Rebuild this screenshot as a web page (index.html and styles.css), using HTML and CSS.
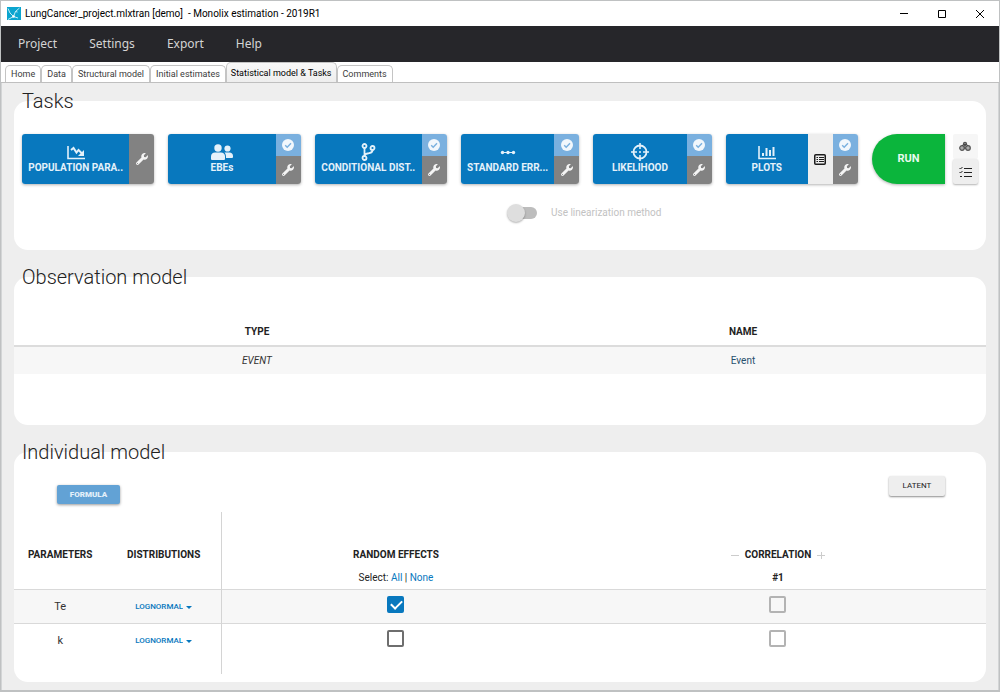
FILE: index.html
```html
<!DOCTYPE html>
<html lang="en">
<head>
<meta charset="utf-8">
<title>Monolix estimation</title>
<link rel="stylesheet" href="styles.css">
</head>
<body>
<svg class="defs" aria-hidden="true">
  <symbol id="wrench" viewBox="0 0 512 512"><path fill="currentColor" d="M507.73 109.1c-2.24-9.03-13.54-12.09-20.12-5.51l-74.36 74.36-67.88-11.31-11.31-67.88 74.36-74.36c6.62-6.62 3.43-17.9-5.66-20.16-47.38-11.74-99.55.91-136.58 37.93-39.64 39.64-50.55 97.1-34.05 147.2L18.74 402.76c-24.99 24.99-24.99 65.51 0 90.5 24.99 24.99 65.51 24.99 90.5 0l213.21-213.21c50.12 16.71 107.47 5.68 147.37-34.22 37.07-37.07 49.7-89.32 37.91-136.73zM64 472c-13.25 0-24-10.75-24-24 0-13.26 10.75-24 24-24s24 10.74 24 24c0 13.25-10.75 24-24 24z"/></symbol>
  <symbol id="check" viewBox="0 0 12 12"><circle cx="6" cy="6" r="6" fill="#f2f7fc"/><path d="M3.2 6.2l2 2 3.800-4" fill="none" stroke="#7ab0df" stroke-width="1.400"/></symbol>
</svg>
<div class="window">
  <header class="titlebar">
    <svg class="logo" viewBox="0 0 14 14" aria-hidden="true"><rect width="14" height="13" fill="#0ba5cf"/><path d="M1 1.500l2 4.500 3.500 3.500M12.500 1L8.500 4.500l-2 5M1 12.500L6.500 9.500 11 11M8.500 4.500l2 .5" fill="none" stroke="#d6f4fb" stroke-width=".9"/><circle cx="6.500" cy="9.500" r="1.300" fill="#fff"/></svg>
    <h1 class="caption">LungCancer_project.mlxtran [demo]&nbsp; - Monolix estimation - 2019R1</h1>
    <button class="win-btn" aria-label="Minimize"><svg width="10" height="10" viewBox="0 0 10 10"><path d="M1 4.500h8" stroke="#000"/></svg></button>
    <button class="win-btn" aria-label="Maximize"><svg width="10" height="10" viewBox="0 0 10 10"><path d="M1.500 1.500h7v7h-7z" fill="none" stroke="#000"/></svg></button>
    <button class="win-btn" aria-label="Close"><svg width="10" height="10" viewBox="0 0 10 10"><path d="M1 1l8 8M9 1L1 9" stroke="#000"/></svg></button>
  </header>
  <nav class="menu">
    <button>Project</button><button>Settings</button><button>Export</button><button>Help</button>
  </nav>
  <nav class="tabs">
    <button class="tab">Home</button>
    <button class="tab">Data</button>
    <button class="tab">Structural model</button>
    <button class="tab">Initial estimates</button>
    <button class="tab active">Statistical model &amp; Tasks</button>
    <button class="tab">Comments</button>
  </nav>
  <main class="content">
    <section class="section">
      <h2>Tasks</h2>
      <div class="panel tasks">
        <div class="task-row">
          <div class="task">
            <button class="task-main"><svg width="18" height="15" viewBox="0 0 18 15"><path d="M1 1v12.500h17" fill="none" stroke="currentColor" stroke-width="1.600"/><path d="M4 5l2.500-2 3 4.500 2-2.500 4 4" fill="none" stroke="currentColor" stroke-width="2"/><path d="M17 5v6h-6z" fill="currentColor"/></svg><span>POPULATION PARA..</span></button>
            <div class="side"><button class="settings" aria-label="Settings"><svg width="12" height="12"><use href="#wrench"/></svg></button></div>
          </div>
          <div class="task">
            <button class="task-main"><svg width="22" height="16" viewBox="0 0 22 16"><g fill="currentColor"><circle cx="7" cy="4" r="3.700"/><path d="M0 15v-2.500c0-2.500 1.800-4 4-4h6c2.200 0 4 1.500 4 4V15q0 1-1 1H1q-1 0-1-1z"/><circle cx="16.500" cy="4.500" r="3.100"/><path d="M13.500 8.500h5c2 0 3.500 1.500 3.500 3.500v1q0 1-1 1h-6c0-2.500 0-4-1.500-5.500z"/></g></svg><span>EBEs</span></button>
            <div class="side"><button class="done" aria-label="Enabled"><svg width="12" height="12"><use href="#check"/></svg></button><button class="settings" aria-label="Settings"><svg width="12" height="12"><use href="#wrench"/></svg></button></div>
          </div>
          <div class="task">
            <button class="task-main"><svg width="15" height="18" viewBox="0 0 15 18"><g fill="none" stroke="currentColor" stroke-width="1.800"><circle cx="3.500" cy="3" r="2"/><circle cx="3.500" cy="15" r="2"/><circle cx="11.500" cy="5" r="2"/><path d="M3.500 5v8M11.500 7c0 3-2 3-5 3.500-2 .3-3 1-3 2.500"/></g></svg><span>CONDITIONAL DIST..</span></button>
            <div class="side"><button class="done" aria-label="Enabled"><svg width="12" height="12"><use href="#check"/></svg></button><button class="settings" aria-label="Settings"><svg width="12" height="12"><use href="#wrench"/></svg></button></div>
          </div>
          <div class="task narrow">
            <button class="task-main"><svg width="16" height="16" viewBox="0 0 16 16"><path d="M2 8.500h12" stroke="currentColor" stroke-width="1.200"/><g fill="currentColor"><circle cx="2.500" cy="8.500" r="1.700"/><circle cx="8" cy="8.500" r="1.700"/><circle cx="13.500" cy="8.500" r="1.700"/></g></svg><span>STANDARD ERR...</span></button>
            <div class="side"><button class="done" aria-label="Enabled"><svg width="12" height="12"><use href="#check"/></svg></button><button class="settings" aria-label="Settings"><svg width="12" height="12"><use href="#wrench"/></svg></button></div>
          </div>
          <div class="task narrow">
            <button class="task-main"><svg width="18" height="18" viewBox="0 0 18 18"><circle cx="9" cy="9" r="6.500" fill="none" stroke="currentColor" stroke-width="1.800"/><path d="M9 0v6M9 12v6M0 9h6M12 9h6" stroke="currentColor" stroke-width="1.600"/><circle cx="9" cy="9" r="1" fill="currentColor"/></svg><span>LIKELIHOOD</span></button>
            <div class="side"><button class="done" aria-label="Enabled"><svg width="12" height="12"><use href="#check"/></svg></button><button class="settings" aria-label="Settings"><svg width="12" height="12"><use href="#wrench"/></svg></button></div>
          </div>
          <div class="task">
            <button class="task-main"><svg width="18" height="15" viewBox="0 0 18 15"><path d="M1 1v12.500h17" fill="none" stroke="currentColor" stroke-width="1.600"/><path d="M5 11V8M8.500 11V3M12 11V5M15.500 11V2" stroke="currentColor" stroke-width="2"/></svg><span>PLOTS</span></button>
            <button class="list" aria-label="Plot list"><svg width="12" height="11" viewBox="0 0 12 11"><rect x=".75" y=".75" width="10.500" height="9.500" rx="1" fill="#eee" stroke="#1c1c1c" stroke-width="1.500"/><path d="M2.500 3.500h1.500M5 3.500h5M2.500 5.500h1.500M5 5.500h5M2.500 7.500h1.500M5 7.500h5" stroke="#1c1c1c"/></svg></button>
            <div class="side"><button class="done" aria-label="Enabled"><svg width="12" height="12"><use href="#check"/></svg></button><button class="settings" aria-label="Settings"><svg width="12" height="12"><use href="#wrench"/></svg></button></div>
          </div>
          <div class="run-group">
            <button class="run">RUN</button>
            <div class="extras">
              <button class="extra" aria-label="Assessment"><svg width="12" height="11" viewBox="0 0 12 11"><g fill="#aaa" stroke="#555" stroke-width="1.200"><circle cx="3" cy="7" r="2.300"/><circle cx="9" cy="7" r="2.300"/><circle cx="6" cy="2.800" r="1.500"/></g><path d="M6 3v5M3 4.500L6 3l3 1.500" fill="none" stroke="#444"/></svg></button>
              <button class="extra raised" aria-label="Checklist"><svg width="13" height="12" viewBox="0 0 13 12"><path d="M5 2.500h8M5 6.500h8M5 10.500h8" stroke="#222"/><path d="M.5 2l1 1 2-2M.5 6l1 1 2-2M1 10.500h2" fill="none" stroke="#222"/></svg></button>
            </div>
          </div>
        </div>
        <label class="switch"><input type="checkbox" disabled><span>Use linearization method</span></label>
      </div>
    </section>

    <section class="section">
      <h2>Observation model</h2>
      <div class="panel observation">
        <table class="obs-table">
          <thead><tr><th>TYPE</th><th>NAME</th></tr></thead>
          <tbody><tr><td class="type">EVENT</td><td class="name">Event</td></tr></tbody>
        </table>
      </div>
    </section>

    <section class="section last">
      <h2>Individual model</h2>
      <div class="panel individual">
        <div class="toolbar"><button class="formula">FORMULA</button><button class="latent">LATENT</button></div>
        <table class="ind-table">
          <colgroup><col class="c-param"><col class="c-dist"><col class="c-random"><col class="c-corr"></colgroup>
          <thead><tr>
            <th>PARAMETERS</th>
            <th class="dist">DISTRIBUTIONS</th>
            <th>RANDOM EFFECTS<div class="sub">Select: <a href="#all">All</a> | <a href="#none">None</a></div></th>
            <th><div class="corr"><button aria-label="Remove group"><svg width="8" height="8" viewBox="0 0 8 8"><path d="M0 4.500h8" stroke="#ccc"/></svg></button>CORRELATION<button aria-label="Add group"><svg width="8" height="8" viewBox="0 0 8 8"><path d="M0 4.500h8M4.500 1v7" stroke="#ccc"/></svg></button></div><div class="num">#1</div></th>
          </tr></thead>
          <tbody>
            <tr>
              <td>Te</td>
              <td class="dist"><span class="picker"><select aria-label="Distribution of Te"><option>LOGNORMAL</option></select></span></td>
              <td><input class="box" type="checkbox" checked aria-label="Random effect on Te"></td>
              <td><input class="box" type="checkbox" disabled aria-label="Correlation 1 for Te"></td>
            </tr>
            <tr>
              <td>k</td>
              <td class="dist"><span class="picker"><select aria-label="Distribution of k"><option>LOGNORMAL</option></select></span></td>
              <td><input class="box" type="checkbox" aria-label="Random effect on k"></td>
              <td><input class="box" type="checkbox" disabled aria-label="Correlation 1 for k"></td>
            </tr>
          </tbody>
        </table>
      </div>
    </section>
  </main>
</div>
</body>
</html>
```
FILE: styles.css
```css
* { box-sizing: border-box; }
body { margin: 0; font-family: Roboto, "Liberation Sans", sans-serif; font-size: 11px; line-height: 16px; color: #222; background: #fff; }
button { font: inherit; color: inherit; border: 0; padding: 0; background: none; }
svg { display: block; }
.defs { position: absolute; width: 0; height: 0; }

.window { min-height: 100vh; display: flex; flex-direction: column; border: 1px solid #bfc1c2; border-bottom-width: 2px; }

.titlebar { display: flex; align-items: center; height: 25px; padding-left: 6px; }
.logo { width: 14px; height: 14px; margin-right: 4px; }
.caption { flex: 1; margin: 0; font: 400 10px/16px Roboto, sans-serif; color: #000; }
.win-btn { width: 38px; height: 24px; display: flex; align-items: center; justify-content: center; }

.menu { display: flex; gap: 32px; align-items: center; height: 36px; padding-left: 17px; background: #26262a; }
.menu button { font: 400 12px/16px "Noto Sans", sans-serif; color: #d4d4d4; }

.tabs { display: flex; align-items: flex-end; height: 21px; padding-left: 4px; border-bottom: 1px solid #bfbfbf; }
.tab { height: 17px; padding: 0 5px; border: 1px solid #c4c4c4; border-bottom: 0; border-radius: 5px 5px 0 0; background: #fff; font-size: 9px; line-height: 16px; color: #3c3c3c; white-space: nowrap; }
.tab.active { height: 20px; padding: 0 4px; background: linear-gradient(#f8f8f8, #eee); color: #000; }

.content { flex: 1; padding: 6px 12px 8px; border: solid #d3d5d6; border-width: 0 1px; background: #eee; }
.section { margin-bottom: 15px; }
.section.last { margin-bottom: 0; }
h2 { position: relative; margin: 0 0 -12px 8px; font-size: 20px; line-height: 24px; font-weight: 300; color: #222; }
.panel { border-radius: 14px; background: #fff; }

.tasks { padding: 33px 8px 28px; }
.task-row { display: flex; gap: 14px; }
.task { flex: 1 1 132px; display: flex; height: 50px; border-radius: 3px; overflow: hidden; box-shadow: 0 1px 3px rgba(0, 0, 0, .3); }
.task.narrow { flex-basis: 118px; }
.task-main { flex: 1; min-width: 0; padding: 9px 0; display: flex; flex-direction: column; align-items: center; background: #0878be; color: #e4f1fa; font-weight: 700; font-size: 10px; line-height: 14px; white-space: nowrap; }
.task-main svg { margin: auto 0; }
.side { width: 25px; display: flex; flex-direction: column; }
.side button, .list { flex: 1; display: flex; align-items: center; justify-content: center; }
.side .done { flex: 0 0 22px; background: #7ab0df; }
.settings { background: #828282; color: #f4f4f4; }
.list { flex: 0 0 25px; background: #eee; }
.run-group { display: flex; gap: 8px; }
.run { width: 73px; height: 50px; border-radius: 25px 0 0 25px; background: #0bb53c; color: #e9fbee; font-weight: 700; box-shadow: 0 1px 3px rgba(0, 0, 0, .3); }
.extras { display: flex; flex-direction: column; width: 25px; }
.extra { flex: 1; display: flex; align-items: center; justify-content: center; background: #f6f6f6; border-radius: 2px; }
.extra.raised { background: #eee; box-shadow: 0 1px 2px rgba(0, 0, 0, .3); }

.switch { display: flex; align-items: center; gap: 14px; height: 18px; margin: 20px 0 0 calc(50% + 7px); color: #c2c2c2; font-size: 10px; }
.switch input { appearance: none; position: relative; width: 27px; height: 12px; margin: 0 0 0 3px; border-radius: 6px; background: #bdbdbd; }
.switch input::before { content: ""; position: absolute; left: -3px; top: -3px; width: 18px; height: 18px; border-radius: 50%; background: #dedede; box-shadow: 0 1px 2px rgba(0, 0, 0, .3); }

table { width: 100%; border-collapse: separate; border-spacing: 0; table-layout: fixed; text-align: center; }
th { font-size: 10px; font-weight: 700; color: #222; }
td { color: #333; }

.observation { padding: 44px 0 51px; }
.obs-table th { padding: 3px 0 5px; border-bottom: 2px solid #dcdcdc; }
.obs-table td { height: 27px; padding: 0; background: #f7f7f7; font-size: 10px; }
.obs-table .type { font-style: italic; }
.obs-table .name { color: #27506e; }

.individual { padding: 24px 0 8px; }
.toolbar { display: flex; justify-content: space-between; align-items: flex-start; height: 36px; padding: 0 41px 0 43px; font-size: 8px; }
.formula { margin-top: 9px; width: 63px; height: 19px; border-radius: 2px; background: #62a2d5; color: #e3f0fa; font-weight: 900; box-shadow: 0 1px 3px rgba(0, 0, 0, .4); }
.latent { width: 56px; height: 20px; border-radius: 2px; background: #eee; color: #222; box-shadow: 0 1px 2px rgba(0, 0, 0, .45); }
.c-param { width: 9.5%; }
.c-dist { width: 11.9%; }
.c-random { width: 35.8%; }
.ind-table th { height: 77px; padding: 35px 0 3px; vertical-align: top; }
.ind-table td { padding: 0; height: 34px; border-top: 1px solid #d9d9d9; }
.ind-table tbody tr:first-child td { background: #f7f7f7; }
.ind-table tbody tr:last-child td { height: 51px; padding-bottom: 17px; }
.ind-table .dist { border-right: 1px solid #d4d4d4; }
.sub, .num { margin-top: 7px; }
.sub { font-weight: 400; font-size: 10px; }
a { color: #0878be; text-decoration: none; }
.corr { display: flex; justify-content: center; align-items: center; gap: 6px; }
.picker { display: inline-flex; align-items: center; gap: 3px; }
.picker::after { content: ""; border: 3px solid transparent; border-top-color: #0878be; border-bottom: 0; }
.picker select { appearance: none; border: 0; padding: 0; background: none; font: 500 8px/16px Roboto, sans-serif; color: #0878be; }
.box { appearance: none; position: relative; display: block; width: 17px; height: 17px; margin: 0 auto 4px; border: 2px solid #6e6e6e; border-radius: 2px; background: #fff; }
.box:disabled { border-color: #b3b3b3; background: none; }
.box:checked { border-color: #0878be; background: #0878be; }
.box:checked::after { content: ""; position: absolute; left: 4px; top: 0; width: 5px; height: 9px; border: solid #fff; border-width: 0 2px 2px 0; transform: rotate(45deg); }
```
